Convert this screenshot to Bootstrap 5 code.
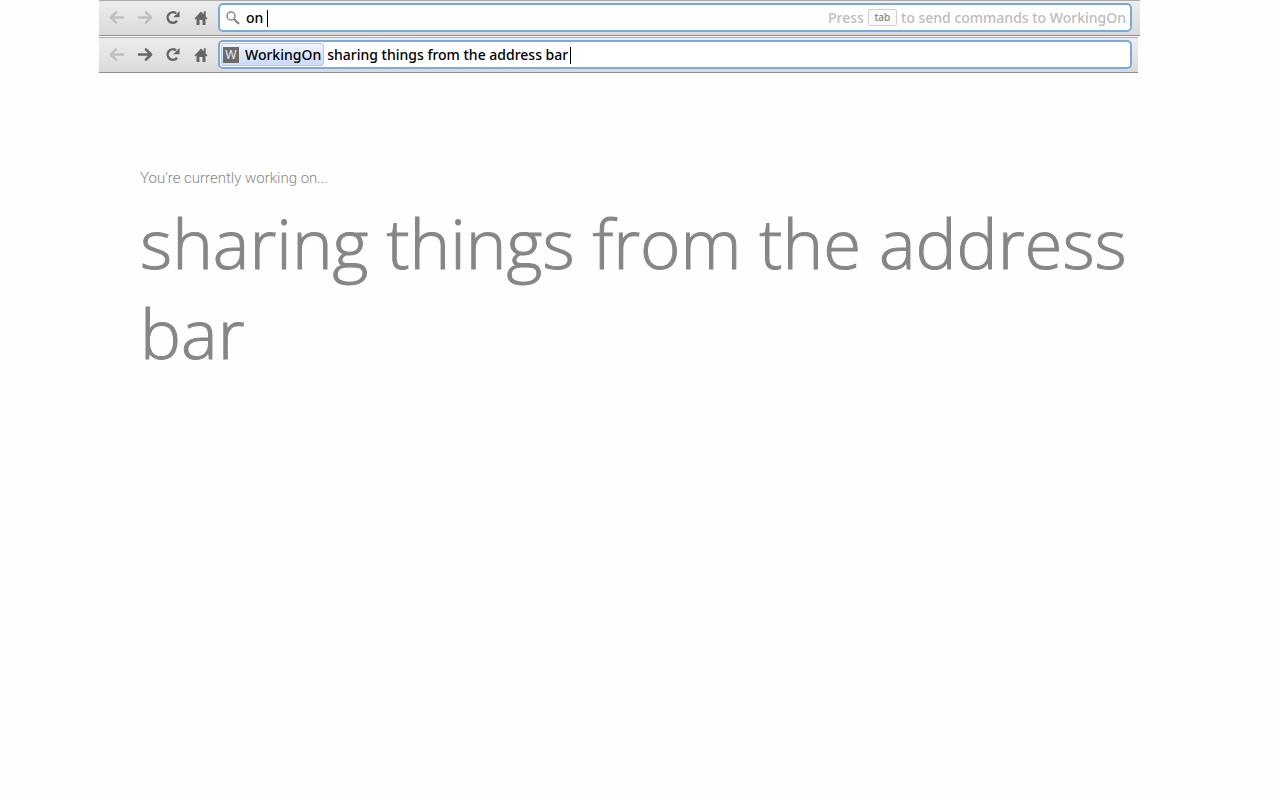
<!DOCTYPE html>
<html lang="en">
<head>
<meta charset="utf-8">
<meta name="viewport" content="width=device-width, initial-scale=1">
<title>WorkingOn</title>
<link rel="stylesheet" href="https://cdn.jsdelivr.net/npm/bootstrap@5.3.0/dist/css/bootstrap.min.css">
<style>
  body { background: #fefefe; }
  .page { margin-left: 99px; margin-right: 140px; }
  .toolbar {
    font: 500 14px/20px "Noto Sans", sans-serif;
    height: 36px;
    padding: 0 8px 1px 4px;
    background: linear-gradient(#ededed, #dadada);
    border-top: 1px solid #aca9ab;
    border-bottom: 1px solid #8c8c8c;
  }
  .toolbar-second { margin-top: 1px; margin-right: 2px; padding-right: 6px; }
  .tool { width: 28px; height: 28px; color: #666; }
  .tool:disabled { color: #c0c0c0; opacity: 1; }
  .flip { transform: scaleX(-1); }
  .omnibox {
    height: 29px;
    margin-left: 3px;
    border: 2px solid #78abdb;
    border-radius: 5px;
    background: #fff;
  }
  .omnibox input { outline: 0; color: #000; font: inherit; }
  .caret { top: 2px; width: 1px; height: 17px; background: #000; }
  .caret-on { left: 21px; }
  .caret-bar { left: 243px; }
  .hint { color: #bcbcbc; padding-right: 4px; }
  .hint kbd {
    font: 500 10px/14px "Noto Sans", sans-serif;
    width: 29px;
    height: 17px;
    color: #888;
    background: #fafafa;
    border: 1px solid #d0d0d0;
    border-radius: 2px;
  }
  .chip {
    height: 23px;
    gap: 6px;
    padding: 0 2px 0 1px;
    margin: 0 3px 0 1px;
    border: 1px solid #b0c4ec;
    border-radius: 3px;
    color: #000;
    background: linear-gradient(#f1f5fe, #cbdaf8);
  }
  .tile {
    width: 16px;
    height: 16px;
    background: #6b6b6b;
    color: #ddd;
    font: 500 12px/16px "Noto Sans", sans-serif;
  }
  .status { padding: 94px 0 0 41px; }
  .status p { font: 300 15px/22px Roboto, sans-serif; color: #888; }
  .status h1 { font: 300 69px/90px "Open Sans", sans-serif; color: #868686; -webkit-text-stroke: 1px #868686; margin-top: 8px; }
</style>
</head>
<body>
<svg class="d-none" aria-hidden="true">
  <symbol id="arrow" viewBox="0 0 16 16"><path d="M1.500 8H14M9 2.500L14.500 8 9 13.500" fill="none" stroke="currentColor" stroke-width="2.700" stroke-linecap="round" stroke-linejoin="round"/></symbol>
  <symbol id="reload" viewBox="0 0 16 16"><path d="M12.300 11.500A5.600 5.600 0 1 1 11.300 3.600" fill="none" stroke="currentColor" stroke-width="2.600"/><path d="M15 1v6.800H8.200z" fill="currentColor"/></symbol>
  <symbol id="home" viewBox="0 0 14 16"><path d="M7 1.500L.5 8.500l.8 1L2.500 8.500V15h3V10h3v5h3V8.500l1.200 1 .8-1-1.800-2V1.200H9.800v3z" fill="currentColor"/></symbol>
</svg>
<div class="page">
  <nav class="toolbar d-flex align-items-center" aria-label="Browser toolbar, typing the keyword">
    <button class="tool btn p-0 border-0 d-flex align-items-center justify-content-center" type="button" aria-label="Back" disabled><svg class="flip" width="16" height="15"><use href="#arrow"/></svg></button>
    <button class="tool btn p-0 border-0 d-flex align-items-center justify-content-center" type="button" aria-label="Forward" disabled><svg width="16" height="15"><use href="#arrow"/></svg></button>
    <button class="tool btn p-0 border-0 d-flex align-items-center justify-content-center" type="button" aria-label="Reload"><svg width="16" height="15"><use href="#reload"/></svg></button>
    <button class="tool btn p-0 border-0 d-flex align-items-center justify-content-center" type="button" aria-label="Home"><svg width="14" height="16"><use href="#home"/></svg></button>
    <div class="omnibox d-flex align-items-center flex-grow-1">
      <svg class="mx-1 flex-shrink-0" width="18" height="16" viewBox="0 0 18 16" fill="none" stroke="#888"><circle cx="7" cy="6" r="4" stroke-width="1.500"/><path d="M10 9l5 5" stroke-width="2.400"/></svg>
      <div class="position-relative flex-grow-1">
        <input class="border-0 p-0 w-100 d-block bg-transparent" type="text" value="on " aria-label="Address">
        <span class="caret caret-on position-absolute"></span>
      </div>
      <div class="hint d-flex align-items-center text-nowrap gap-1">Press <kbd class="p-0 text-center">tab</kbd> to send commands to WorkingOn</div>
    </div>
  </nav>
  <nav class="toolbar toolbar-second d-flex align-items-center" aria-label="Browser toolbar, sending a command">
    <button class="tool btn p-0 border-0 d-flex align-items-center justify-content-center" type="button" aria-label="Back" disabled><svg class="flip" width="16" height="15"><use href="#arrow"/></svg></button>
    <button class="tool btn p-0 border-0 d-flex align-items-center justify-content-center" type="button" aria-label="Forward"><svg width="16" height="15"><use href="#arrow"/></svg></button>
    <button class="tool btn p-0 border-0 d-flex align-items-center justify-content-center" type="button" aria-label="Reload"><svg width="16" height="15"><use href="#reload"/></svg></button>
    <button class="tool btn p-0 border-0 d-flex align-items-center justify-content-center" type="button" aria-label="Home"><svg width="14" height="16"><use href="#home"/></svg></button>
    <div class="omnibox d-flex align-items-center flex-grow-1">
      <label class="chip d-flex align-items-center" for="command"><span class="tile text-center">W</span><span>WorkingOn</span></label>
      <div class="position-relative flex-grow-1">
        <input class="border-0 p-0 w-100 d-block bg-transparent" type="text" id="command" value="sharing things from the address bar">
        <span class="caret caret-bar position-absolute"></span>
      </div>
    </div>
  </nav>
  <main class="status">
    <p class="mb-0">You're currently working on...</p>
    <h1 class="mb-0">sharing things from the address bar</h1>
  </main>
</div>
<script src="https://cdn.jsdelivr.net/npm/bootstrap@5.3.0/dist/js/bootstrap.bundle.min.js"></script>
</body>
</html>
